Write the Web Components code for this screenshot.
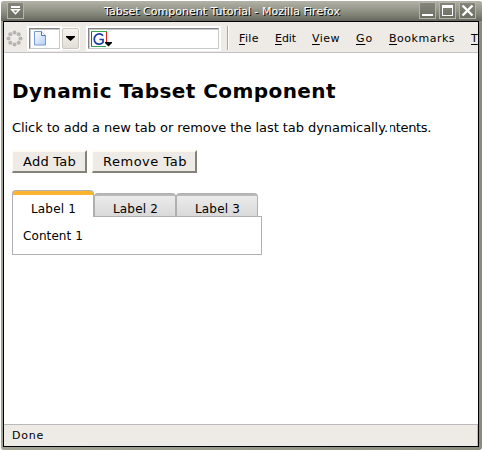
<!DOCTYPE html>
<html lang="en"><head><meta charset="utf-8"><title>Tabset Component Tutorial</title>
<style>
html,body{margin:0;background:#fff;width:482px;height:450px;overflow:hidden}
body{font:13px/16px "DejaVu Sans",sans-serif;color:#000}
</style></head><body>
<browser-window></browser-window>
<script>
function define(name, html, ready){
  const t=document.createElement('template'); t.innerHTML=html;
  customElements.define(name, class extends HTMLElement{
    connectedCallback(){
      if(this.shadowRoot) return;
      this.attachShadow({mode:'open'}).append(t.content.cloneNode(true));
      if(ready) ready(this,this.shadowRoot);
    }
  });
}
// Text run spaced to occupy the advance width given in its "w" attribute.
define('fit-text','<style>:host{display:inline-block;white-space:pre;flex:none}</style><slot></slot>',el=>{
  const w=+el.getAttribute('w');
  const nat=el.getBoundingClientRect().width;
  el.style.letterSpacing=((w-nat)/el.textContent.length)+'px';
});
define('window-button',`<style>:host{display:block;box-sizing:border-box;width:17px;height:17px;border:1px solid #b3b3a7;background:linear-gradient(#85857b,#6c6e63)}svg{display:block}</style><slot></slot>`);
define('title-bar',`<style>:host{display:flex;box-sizing:border-box;height:20px;padding:1px 6px 0 6px;background:linear-gradient(#b2b2a6,#9b9c90 35%,#7d7e72 75%,#65675c);border-radius:3px 3px 0 0;align-items:flex-start}
.t{flex:1;padding-left:80px;font-size:11px;line-height:19px;color:#fff;text-shadow:1px 1px 0 #000}.b{display:flex;gap:3px}svg{display:block}</style>
<window-button><svg width="15" height="15"><path d="M3 4h9" stroke="#fff" stroke-width="2"/><path d="M3.800 6.700h7.400L7.500 10.700z" fill="none" stroke="#fff" stroke-width="1.500"/></svg></window-button>
<div class="t"><fit-text w="236">Tabset Component Tutorial - Mozilla Firefox</fit-text></div>
<div class="b"><window-button><svg width="15" height="15"><path d="M2 12h11" stroke="#fff" stroke-width="2"/></svg></window-button>
<window-button><svg width="15" height="15"><path d="M2 2h11v11H2zM3 5v7h9V5z" fill="#fff" fill-rule="evenodd"/></svg></window-button>
<window-button><svg width="15" height="15"><path d="M2.500 2.500l10 10M12.500 2.500l-10 10" stroke="#fff" stroke-width="2.400"/></svg></window-button></div>`);
define('menu-item',`<style>:host{display:block;font-size:11px;line-height:14px;flex:none}</style><slot></slot>`);
define('tool-bar',`<style>:host{display:flex;box-sizing:border-box;height:31px;background:#eeebe6;border-bottom:1px solid #c5bfc8;overflow:hidden}
svg{display:block}.throb{margin:8px 0 0 2px;flex:none}
.field{box-sizing:border-box;flex:none;height:21px;margin-top:6px;background:#fff;border:1px solid;border-color:#858585 #c9c9c9 #c9c9c9 #858585;box-shadow:inset 1px 1px 0 #c9c9c9,0 0 0 2px #fff}
.drop{box-sizing:border-box;flex:none;width:17px;height:21px;margin:6px 0 0 2px;background:linear-gradient(#f5f3ee,#e3dfd8);border:1px solid #cbc7c0;border-radius:2px;box-shadow:0 0 0 1px #fff}
.sep{width:1px;height:24px;background:#aaa69e;box-shadow:1px 0 #fff;margin:4px 0 0 8px;flex:none}
nav{display:flex;gap:16px;padding:10px 0 0 11px;flex:none}u{text-underline-offset:2px}</style>
<svg class="throb" width="17" height="17"><g fill="#b4b4b4"><circle cx="8.500" cy="2.500" r="2"/><circle cx="12.700" cy="4.300" r="2"/><circle cx="14.500" cy="8.500" r="2"/><circle cx="12.700" cy="12.700" r="2"/><circle cx="8.500" cy="14.500" r="2"/><circle cx="4.300" cy="12.700" r="2"/><circle cx="2.500" cy="8.500" r="2"/><circle cx="4.300" cy="4.300" r="2"/></g></svg>
<div class="field" style="width:31px;margin-left:6px"><svg width="29" height="19"><defs><linearGradient id="g" x2="1" y2="1"><stop stop-color="#fff"/><stop offset="1" stop-color="#b4cdf8"/></linearGradient></defs><path d="M4.500 2.500h7l4 4v9.500h-11z" fill="url(#g)" stroke="#7897d5"/><path d="M11.500 2.500v4h4" fill="#fff" stroke="#4c70bb"/></svg></div>
<div class="drop"><svg width="15" height="19"><path d="M3 7h9v1L7.500 12 3 8z"/></svg></div>
<div class="field" style="width:131px;margin-left:9px"><svg width="30" height="19"><path d="M2.500 17V2" fill="none" stroke="#334fc0"/><path d="M2 2.500h16" stroke="#36a646"/><path d="M17.500 3v11" stroke="#e02424"/><path d="M2 17.500h15" stroke="#36a646"/><path d="M14 6.800C12.500 4.500 9 4.300 7 6.200C4.700 8.500 4.700 12 6.800 14C9 15.800 12.500 15.200 14 13.500V10.500H10.500" fill="none" stroke="#1e3ca8" stroke-width="1.700"/><path d="M16 13h7v1L19.500 17.500 16 14z"/></svg></div>
<div class="sep"></div>
<nav><menu-item><fit-text w="20"><u>F</u>ile</fit-text></menu-item><menu-item><fit-text w="21"><u>E</u>dit</fit-text></menu-item><menu-item><fit-text w="28"><u>V</u>iew</fit-text></menu-item><menu-item><fit-text w="17"><u>G</u>o</fit-text></menu-item><menu-item><fit-text w="66"><u>B</u>ookmarks</fit-text></menu-item><menu-item><u>T</u></menu-item></nav>`);
define('push-button',`<style>:host{display:block;box-sizing:border-box;height:23px;background:#eeebe6;border:solid;border-width:2px 2px 2px 1px;border-color:#fffaf4 #85827a #85827a #fffaf4;padding:1px 0 0 10px;line-height:18px}</style><slot></slot>`);
define('tab-item',`<style>:host{display:block;box-sizing:border-box;width:82px;height:23px;margin-top:3px;padding:4px 0 0 18px;font-size:12px;line-height:22px;background:
linear-gradient(#b9b9b9,#b9b9b9) 0 0/100% 2px no-repeat,linear-gradient(#ededed,#d9d9d9);border:1px solid #b0b0b0;border-bottom:0;border-radius:4px 4px 0 0}
:host([active]){height:27px;margin:0 0 -1px;padding-top:7px;background:linear-gradient(#ffb32e 4px,#fff 4px);position:relative}</style><slot></slot>`);
define('tab-set',`<style>:host{display:block;width:250px;padding:17px 0 0 8px}.tabs{display:flex;height:26px}.panel{box-sizing:border-box;height:39px;border:1px solid #b0b0b0;padding:10px 0 0 10px;font-size:12px;line-height:18px}</style>
<div class="tabs"><slot name="tab"></slot></div><div class="panel"><slot></slot></div>`);
define('status-bar',`<style>:host{display:block;box-sizing:border-box;height:22px;border-top:1px solid #b9b9bd;border-right:1px solid #c3c0ba;background:#eeebe6;padding:2px 0 0 8px;font-size:11px;line-height:17px}</style><slot></slot>`);
define('browser-window',`<style>:host{display:flex;flex-direction:column;box-sizing:border-box;width:481px;height:449px;margin:1px 0 0 1px;background:linear-gradient(90deg,#a2a393,#898b7b);border-radius:4px 4px 3px 3px;padding-bottom:3px}
.client{display:flex;flex-direction:column;flex:1;margin:0 3px 0 2px;border:1px solid #000;background:#fff;min-height:0}main{flex:1;min-height:0}
h1{font:bold 20px/24px "DejaVu Sans",sans-serif;margin:0;padding:26px 0 0 8px}
p{margin:0;padding:17px 0 0 8px;display:flex;height:16px}.cut{display:flex;justify-content:flex-end;width:41px;margin-left:2px;overflow:hidden}
.buttons{display:flex;gap:4px;padding:14px 0 0 8px}</style>
<title-bar></title-bar><div class="client"><tool-bar></tool-bar><main>
<h1><fit-text w="324">Dynamic Tabset Component</fit-text></h1>
<p><fit-text w="376">Click to add a new tab or remove the last tab dynamically.</fit-text><span class="cut"><fit-text w="43">ntents.</fit-text></span></p>
<div class="buttons"><push-button style="width:75px;margin-right:1px"><fit-text w="53">Add Tab</fit-text></push-button><push-button style="width:105px"><fit-text w="84">Remove Tab</fit-text></push-button></div>
<tab-set><tab-item slot="tab" active><fit-text w="45">Label 1</fit-text></tab-item><tab-item slot="tab"><fit-text w="45">Label 2</fit-text></tab-item><tab-item slot="tab"><fit-text w="45">Label 3</fit-text></tab-item><fit-text w="60">Content 1</fit-text></tab-set>
</main><status-bar><fit-text w="32">Done</fit-text></status-bar></div>`);
</script></body></html>
